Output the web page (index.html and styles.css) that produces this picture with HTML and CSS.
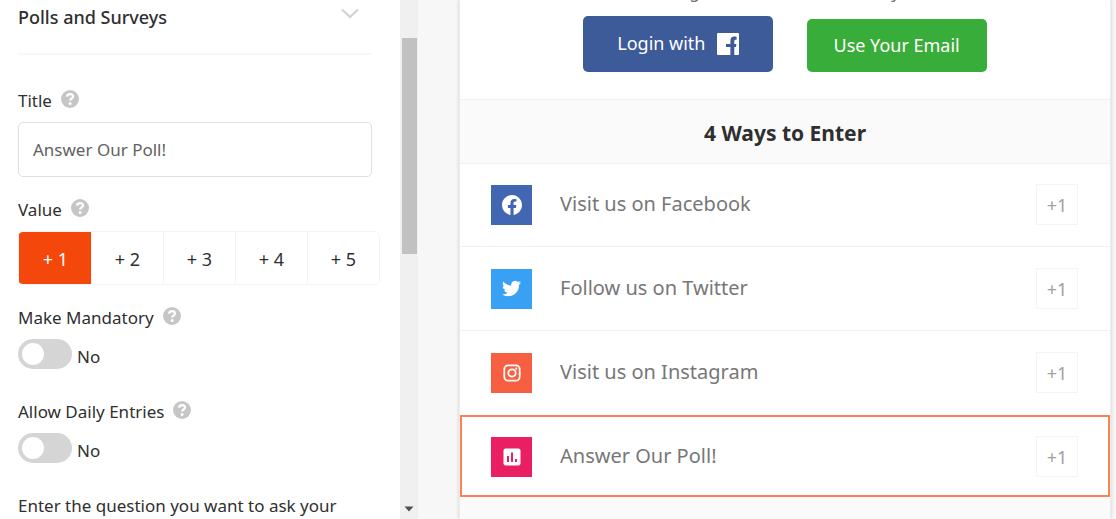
FILE: index.html
```html
<!DOCTYPE html>
<html lang="en">
<head>
<meta charset="utf-8">
<meta name="viewport" content="width=device-width, initial-scale=1">
<title>Giveaway editor</title>
<link rel="stylesheet" href="styles.css">
</head>
<body>
<svg class="sprite" aria-hidden="true">
  <symbol id="help" viewBox="0 0 18 18">
    <circle cx="9" cy="9" r="9" fill="#c6c6c6"/>
    <path d="M6 6.700C6.200 4.900 7.400 4.100 9.100 4.100C10.900 4.100 12 5.100 12 6.500C12 8.500 9.100 8.400 9.100 10.600" fill="none" stroke="#fff" stroke-width="2.300"/>
    <circle cx="9.100" cy="13.500" r="1.500" fill="#fff"/>
  </symbol>
</svg>
<div class="app">
  <aside class="sidebar">
    <header class="panel-head">
      <h2 class="panel-title">Polls and Surveys</h2>
      <button class="collapse" type="button" aria-label="Collapse">
        <svg width="18" height="11" viewBox="0 0 18 11"><path d="M1 1.500L9 9L17 1.500" fill="none" stroke="#d2d2d2" stroke-width="2.200"/></svg>
      </button>
    </header>
    <form class="fields">
      <div class="field">
        <div class="label-row"><label for="title">Title</label><svg class="help"><use href="#help"/></svg></div>
        <input class="text-input" id="title" type="text" value="Answer Our Poll!">
      </div>
      <div class="field">
        <div class="label-row"><span id="value-label">Value</span><svg class="help"><use href="#help"/></svg></div>
        <div class="segments" role="group" aria-labelledby="value-label">
          <button class="segment segment-active" type="button">+ 1</button>
          <button class="segment" type="button">+ 2</button>
          <button class="segment" type="button">+ 3</button>
          <button class="segment" type="button">+ 4</button>
          <button class="segment" type="button">+ 5</button>
        </div>
      </div>
      <div class="field field-switch">
        <div class="label-row"><span>Make Mandatory</span><svg class="help"><use href="#help"/></svg></div>
        <label class="switch-row"><input class="switch" type="checkbox" aria-label="Make Mandatory"><span class="switch-text">No</span></label>
      </div>
      <div class="field field-switch">
        <div class="label-row"><span>Allow Daily Entries</span><svg class="help"><use href="#help"/></svg></div>
        <label class="switch-row"><input class="switch" type="checkbox" aria-label="Allow Daily Entries"><span class="switch-text">No</span></label>
      </div>
      <div class="field">
        <div class="label-row"><span>Enter the question you want to ask your</span></div>
      </div>
    </form>
  </aside>
  <div class="scrollbar">
    <div class="thumb"></div>
    <svg width="10" height="6" viewBox="0 0 10 6"><path d="M0.500 0.500H9.500L5 5.500Z" fill="#505050"/></svg>
  </div>
  <main class="preview">
    <section class="card">
      <p class="intro">Login to enter and win today</p>
      <div class="logins">
        <button class="login login-facebook" type="button">Login with
          <svg width="22" height="22" viewBox="0 0 22 22"><path fill="#fff" fill-rule="evenodd" d="M1 0H21Q22 0 22 1V21Q22 22 21 22H17.300V13.900H19L19.400 10.900H17.300V8.500C17.300 7.300 17.700 6.700 18.500 6.700H19.600V3.700C19.100 3.600 18.300 3.500 17.300 3.500C14.700 3.500 13.400 5 13.400 7.900V10.900H9V13.900H13.400V22H1Q0 22 0 21V1Q0 0 1 0Z"/></svg>
        </button>
        <button class="login login-email" type="button">Use Your Email</button>
      </div>
      <h1 class="ways">4 Ways to Enter</h1>
      <ul class="entries">
        <li class="entry">
          <span class="icon icon-facebook"><svg width="20" height="20" viewBox="0 0 24 24"><path fill="#fff" d="M24 12.073C24 5.446 18.627.073 12 .073S0 5.446 0 12.073C0 18.063 4.388 23.027 10.125 23.927V15.542H7.078V12.073H10.125V9.430C10.125 6.423 11.916 4.761 14.658 4.761C15.970 4.761 17.344 4.996 17.344 4.996V7.949H15.830C14.340 7.949 13.875 8.874 13.875 9.823V12.073H17.203L16.671 15.542H13.875V23.927C19.612 23.027 24 18.063 24 12.073Z"/></svg></span>
          <span class="entry-name">Visit us on Facebook</span><span class="points">+1</span>
        </li>
        <li class="entry">
          <span class="icon icon-twitter"><svg width="19" height="19" viewBox="0 0 24 24"><path fill="#fff" d="M23.953 4.570a10 10 0 0 1-2.825.775 4.958 4.958 0 0 0 2.163-2.723c-.951.555-2.005.959-3.127 1.184a4.920 4.920 0 0 0-8.384 4.482C7.690 8.095 4.067 6.130 1.640 3.162a4.822 4.822 0 0 0-.666 2.475c0 1.710.870 3.213 2.188 4.096a4.904 4.904 0 0 1-2.228-.616v.060a4.923 4.923 0 0 0 3.946 4.827 4.996 4.996 0 0 1-2.212.085 4.936 4.936 0 0 0 4.604 3.417 9.867 9.867 0 0 1-6.102 2.105c-.390 0-.779-.023-1.170-.067a13.995 13.995 0 0 0 7.557 2.209c9.053 0 13.998-7.496 13.998-13.985 0-.210 0-.420-.015-.630A9.935 9.935 0 0 0 24 4.590z"/></svg></span>
          <span class="entry-name">Follow us on Twitter</span><span class="points">+1</span>
        </li>
        <li class="entry">
          <span class="icon icon-instagram"><svg width="18" height="18" viewBox="0 0 18 18" fill="none" stroke="#fff" stroke-width="1.800"><rect x="1.300" y="1.300" width="15.400" height="15.400" rx="4"/><circle cx="9" cy="9" r="3.700"/><circle cx="13.300" cy="4.700" r="1.100" fill="#fff" stroke="none"/></svg></span>
          <span class="entry-name">Visit us on Instagram</span><span class="points">+1</span>
        </li>
        <li class="entry entry-selected">
          <span class="icon icon-poll"><svg width="18" height="18" viewBox="0 0 18 18"><rect x="0.500" y="0.500" width="17" height="17" rx="2" fill="#fff"/><path fill="#e91e63" d="M4 8H6V14H4ZM8 4.500H10V14H8ZM12 11H14V14H12Z"/></svg></span>
          <span class="entry-name">Answer Our Poll!</span><span class="points">+1</span>
        </li>
      </ul>
    </section>
  </main>
</div>
</body>
</html>
```
FILE: styles.css
```css
* { box-sizing: border-box; }

body {
  margin: 0;
  background: #fff;
  color: #2f2f2f;
  font-family: "Noto Sans", "Open Sans", sans-serif;
  font-size: 17px;
  line-height: 24px;
}

button, input { font: inherit; }
.sprite { display: none; }

.app { display: flex; height: 100vh; overflow: hidden; }

.sidebar { flex: 0 0 400px; padding: 5px 28px 0 18px; overflow: hidden; }

.panel-head {
  display: flex;
  align-items: flex-start;
  justify-content: space-between;
  padding-bottom: 24px;
  border-bottom: 2px solid #f8f8f8;
}
.panel-title { margin: 0; font-size: 18px; font-weight: 500; }
.collapse { display: flex; padding: 3px 13px; border: 0; background: none; }

.fields { padding-top: 34px; }
.field { display: flex; flex-direction: column; gap: 9px; margin-bottom: 21px; }
.field-switch { margin-bottom: 31px; }
.label-row { display: flex; gap: 9px; white-space: nowrap; }
.help { width: 18px; height: 18px; margin-top: 1px; }

.text-input {
  width: 100%;
  height: 55px;
  padding: 0 14px;
  border: 1px solid #e0e0e0;
  border-radius: 5px;
  background: #fff;
  color: #626262;
}

.segments {
  display: flex;
  margin-right: -8px;
  border: 1px solid #f4f4f4;
  border-radius: 5px;
  overflow: hidden;
}
.segment {
  flex: 1;
  padding: 15px 0 13px;
  border: 0;
  border-left: 1px solid #f4f4f4;
  background: #fff;
  color: #2f2f2f;
  font-size: 18px;
}
.segment-active { border-color: #f4470b; background: #f4470b; color: #fff; }

.switch-row { display: flex; gap: 5px; height: 30px; }
.switch {
  appearance: none;
  width: 54px;
  height: 30px;
  margin: 0;
  padding: 4px;
  border-radius: 15px;
  background: #d5d5d5;
}
.switch::before {
  content: "";
  display: block;
  width: 22px;
  height: 22px;
  border-radius: 50%;
  background: #fff;
}
.switch-text { padding-top: 6px; }

.scrollbar {
  flex: 0 0 18px;
  display: flex;
  flex-direction: column;
  align-items: center;
  justify-content: space-between;
  padding: 38px 0 7px;
  background: #f0f0f0;
}
.thumb { width: 15px; height: 216px; background: #c1c1c1; }

.preview { flex: 1; padding: 0 5px 0 41px; background: #f7f7f7; }
.card {
  display: flow-root;
  height: 100%;
  border: 1px solid #ececec;
  border-width: 0 1px;
  background: #fafafa;
  box-shadow: 0 0 4px rgba(0, 0, 0, 0.16);
}
.intro { margin: -20px 0 0; padding-bottom: 12px; background: #fff; color: #6f6f6f; text-align: center; }

.logins {
  display: flex;
  justify-content: center;
  align-items: flex-end;
  gap: 34px;
  padding-bottom: 27px;
  background: #fff;
}
.login {
  display: flex;
  align-items: center;
  gap: 11px;
  padding: 15px 27px;
  border: 0;
  border-radius: 5px;
  color: #fff;
  font-size: 18px;
  line-height: 23px;
}
.login-facebook { padding: 16px 34px 17px; background: #3d5a99; }
.login-email { background: #39ad39; }

.ways {
  margin: 0;
  padding: 20px 0 17px;
  border: 1px solid #f1f1f1;
  border-width: 1px 0;
  font-size: 21px;
  line-height: 26px;
  text-align: center;
}

.entries { margin: 0; padding: 0; list-style: none; }
.entry {
  display: flex;
  align-items: center;
  padding: 20px 32px 21px 31px;
  border-bottom: 1px solid #f1f1f1;
  background: #fff;
}
.entry + .entry { padding-top: 21px; }
.entry:nth-child(3) { border-bottom-color: #fff; }
.entries .entry-selected { padding: 19px 30px 18px 29px; border: 2px solid #fa8351; }
.icon { display: flex; align-items: center; justify-content: center; width: 41px; height: 40px; }
.icon-facebook { background: #4267b2; }
.icon-twitter { background: #38a1f3; }
.icon-instagram { background: #f75f42; }
.icon-poll { background: #e91e63; }
.entry-name { flex: 1; padding: 0 0 1px 28px; color: #777; font-size: 20px; }
.points {
  width: 42px;
  height: 41px;
  border: 1px solid #f4f4f4;
  color: #a2a2a2;
  font-size: 18px;
  line-height: 40px;
  text-align: center;
}
```
